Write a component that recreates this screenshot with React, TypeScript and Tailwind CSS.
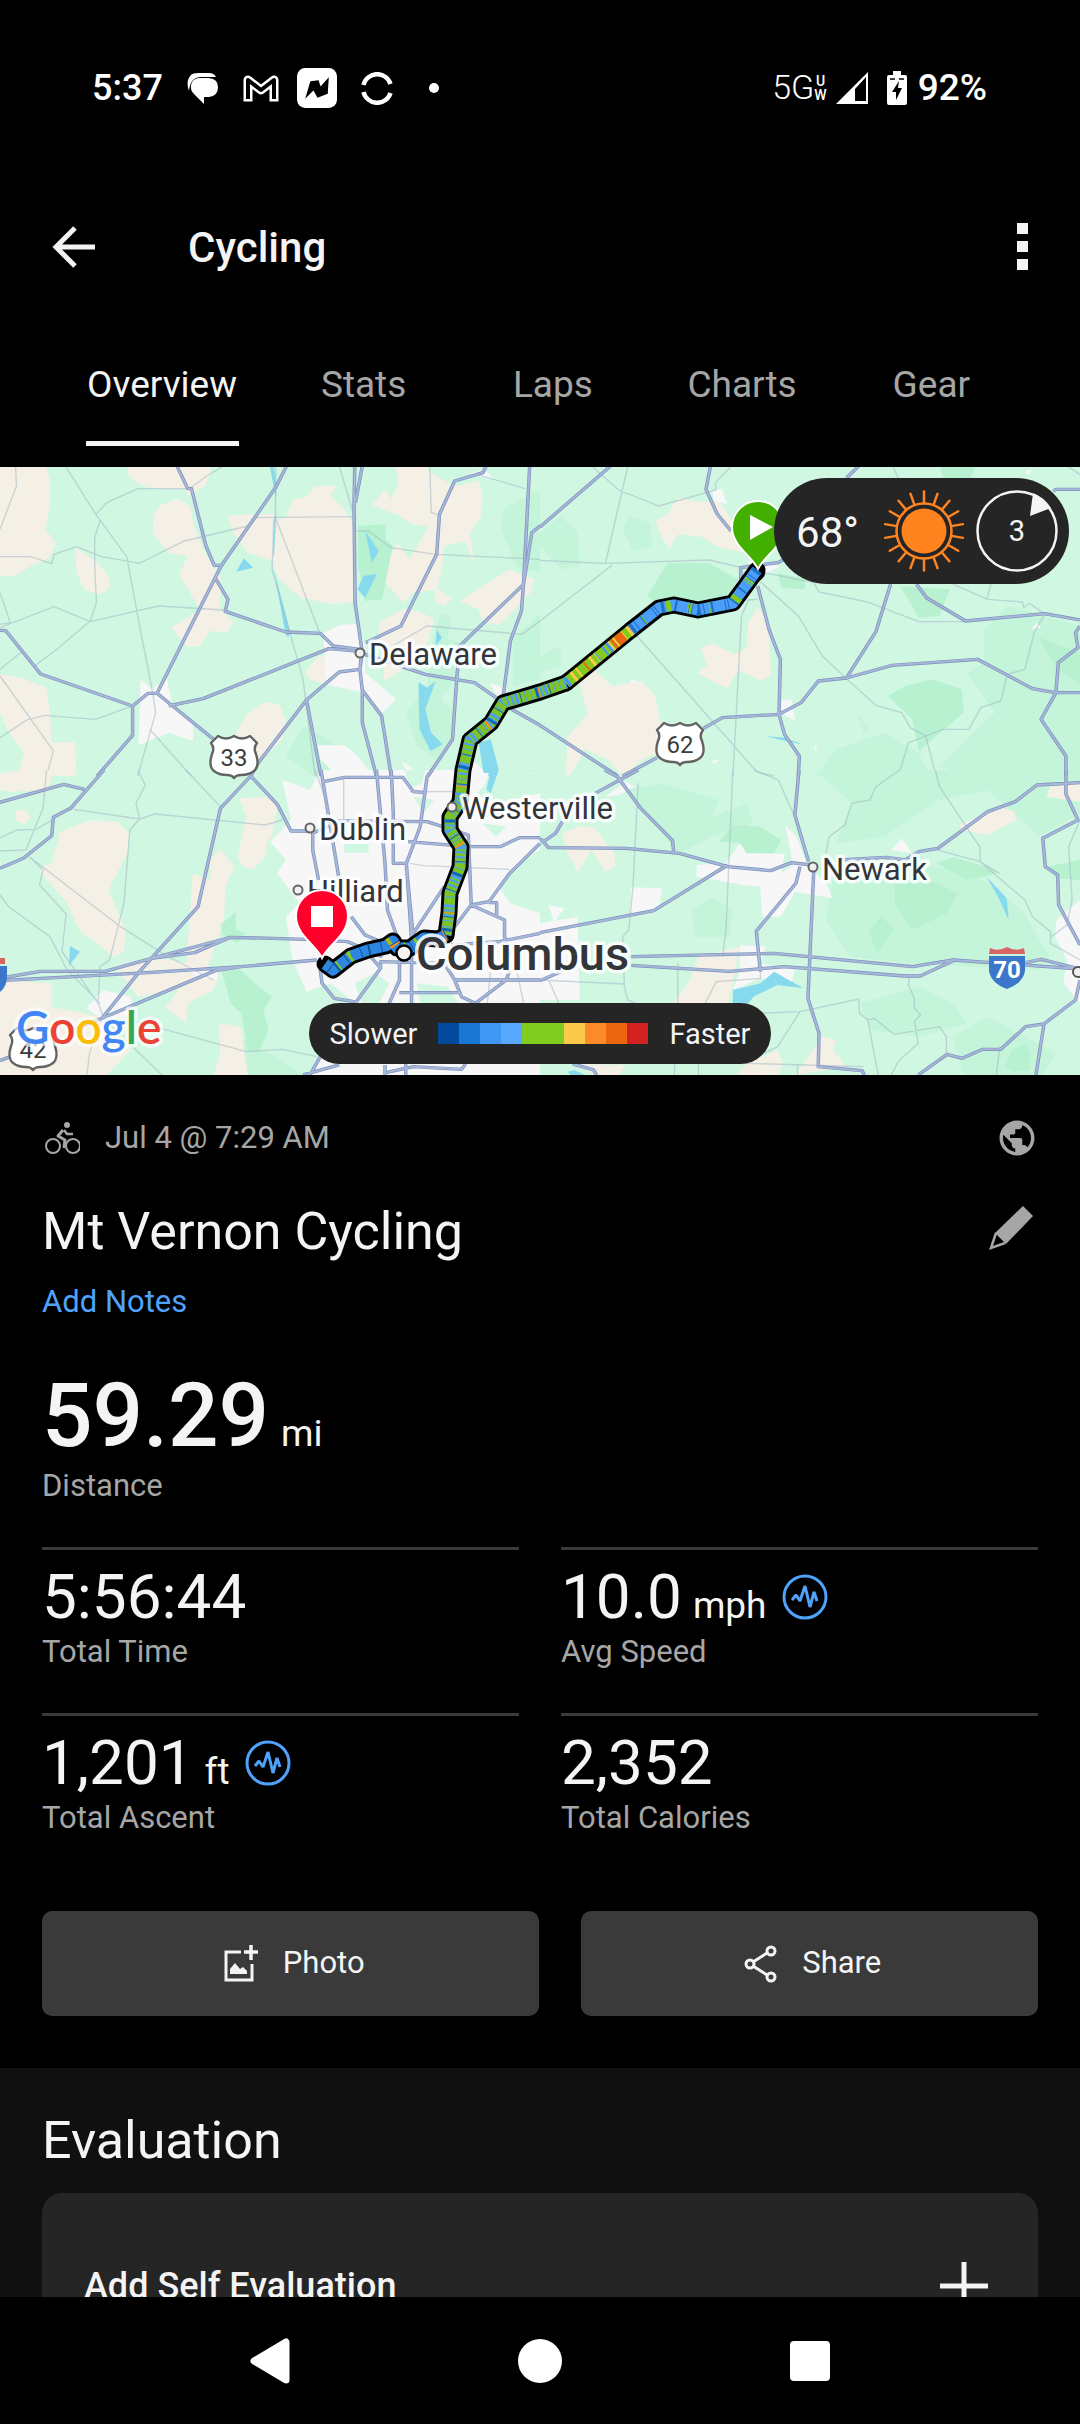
import type { ReactNode } from "react";
import { MdPublic } from "react-icons/md";

const tabs = ["Overview", "Stats", "Laps", "Charts", "Gear"];

const stats = [
  { value: "5:56:44", label: "Total Time" },
  { value: "10.0", unit: "mph", label: "Avg Speed", chart: true },
  { value: "1,201", unit: "ft", label: "Total Ascent", chart: true },
  { value: "2,352", label: "Total Calories" },
];

const speedColors = [
  "bg-[#014a9c]",
  "bg-[#1976d2]",
  "bg-[#3f96f3]",
  "bg-[#56a9ff]",
  "bg-[#82cb1f]",
  "bg-[#82cb1f]",
  "bg-[#fbca4b]",
  "bg-[#fb8b29]",
  "bg-[#ea660f]",
  "bg-[#d32121]",
];

// The map is split in four tiles, each with its own drawing units
const tiles = [
  {
    place: "translate(0 -1) scale(.3444 .3333)",
    beige:
      "M0 0H132L145 40V120L132 190L162 232L150 268L140 278L90 300L50 325L25 333L0 328Z M375 0H610L612 20L595 60L545 90L540 70L430 65L390 45L370 20Z M515 98L552 120L556 150L570 200L600 270L640 330L640 430L676 465L662 500L610 495L580 540L545 543L497 485L580 430L520 325L545 270L490 262L445 205V150L465 118Z M662 148L790 143L800 160L832 152L850 98L885 95L915 62L975 58L960 90L1000 130L1025 170V410L960 413L875 395L810 340L790 285L720 260L680 205Z M1080 118L1120 70L1135 100L1155 55L1150 0H1235L1250 20L1320 60L1390 45L1402 90L1395 155L1365 200L1375 290L1350 225L1290 240L1285 300L1270 370L1200 380L1170 410L1120 350L1110 310L1155 230L1190 280L1245 180L1200 175L1150 145Z M1265 365L1313 395L1290 420L1262 405Z M1335 405L1395 365L1480 310L1550 340L1540 380L1450 478L1400 465L1390 430Z M1100 500V470L1180 425L1225 440L1260 460L1240 540L1170 610L1115 645L1110 560Z M218 245L280 285L318 335V365L285 387L245 370L222 320Z M0 625L60 635L135 665L145 740L150 830L218 828L222 930H50L70 860L20 790L0 740Z M680 810L720 740L770 708L810 715L830 760L820 820L780 860L750 890L735 820Z M885 620L925 570L945 575L945 655L900 640Z",
    light:
      "M1460 130L1568 70V320L1500 300L1455 190Z M1258 520L1280 440L1310 450L1300 520L1340 530L1350 600L1280 700L1320 740L1310 840L1265 880L1210 840L1180 740L1240 660Z M1490 520L1568 440V640L1490 660Z M830 870L880 780L970 830L990 930H910L880 905Z",
    dark: "M1040 180L1120 175V220L1140 240L1110 400L1060 405L1040 300Z",
    urban:
      "M940 500L985 478L1035 473L1060 540V620L1150 700L1112 740L1060 680L945 655Z M408 640L440 668L485 640L500 715L560 770V825L490 800L402 838Z M922 838H1000L1040 870L1080 930H980L930 880Z M1405 10L1435 40L1360 25Z M1340 930L1370 880L1420 930Z M1420 650L1475 670L1450 700Z M1165 885L1230 930H1190Z",
    water:
      "M783 0H795L802 60V100Z M797 150L802 150L796 270L793 268Z M795 310L843 500L836 515L828 500Z M708 277L735 305L686 317Z M1060 195L1100 255L1080 292Z M1055 330L1095 323L1060 395L1038 370Z M1268 490L1283 515L1265 540Z M1215 648L1240 665L1265 645L1235 730L1252 800L1285 835L1250 855L1218 790Z M1390 830L1425 820L1448 910L1430 930H1405Z",
    minor:
      "M190 0L278 145L368 272L400 450L445 690L452 740L400 930 M278 145L310 110L400 68H550L600 30L650 0 M290 165L275 215V300L280 410L262 465L165 550L100 600 M60 560L0 610 M0 272H88L150 293L157 265L222 242L295 272L405 292L535 225L720 180 M0 485L157 422L262 467L460 420L650 432 M45 0L48 60L0 190 M0 630L155 855L135 930 M0 815L78 762L130 748L278 760L385 720 M435 790L555 930 M740 155L1022 152 M800 0V155L928 500 M795 160L790 310L880 640L915 930 M985 0L1028 150 M1035 195H1070L1135 245L1265 265L1568 280 M1248 0L1252 140L1270 145 M1385 25L1525 68 M1140 540L1240 480L1515 505L1568 465 M0 380L30 470L0 475",
    major:
      "M0 493L17 494L118 624L385 720L430 682H456L620 820 M385 720V808L282 930 M514 0L545 68H556L598 240L622 298H642 M832 0L800 65L642 300L456 682 M626 338L662 400L654 436L830 498L930 502L968 540L1045 550 M490 720L590 698L955 548L1045 556 M728 930L750 890L890 702L985 618L1045 610L1050 560 M890 702L932 930 M1030 0L1028 120L1031 410L1052 560L1045 610L1052 672L1108 750L1136 930 M1052 672V770L1093 930 M1052 0L1032 110 M1412 0L1402 20L1320 45L1276 145L1268 265L1164 480L1062 530 M1538 0L1520 355L1514 435L1482 525L1460 700 M1568 180L1544 200L1520 355L1335 540L1326 640L1314 820L1243 930 M1060 565L1235 625L1378 650L1440 695 M1485 730L1568 778",
  },
  {
    place: "translate(540 -1) scale(.3444 .3333)",
    beige:
      "M335 165L370 145L400 95L450 105L520 108L555 160L630 240L580 258L510 240L470 212L400 205L375 248L355 215Z M630 425L660 450L672 630L640 643L575 612L545 668L455 620L485 598L468 545L500 532L565 565L600 545L605 470Z M75 930L80 810L140 745L110 640L155 610L210 660L295 645L335 690L350 770L340 860L300 880L240 930L195 880L130 850L90 925Z",
    light:
      "M240 190L260 150L320 170L325 240L270 255Z M0 200L60 150L110 200L115 300L60 310L0 240Z M1290 490L1360 420L1568 480V930H1240L1160 900L1320 740L1240 620L1290 590Z M800 930L860 850L1000 800L1100 860L1130 930Z M0 570L60 540V600L0 620Z M920 740L960 790L940 800Z",
    dark: "M370 290L490 292L575 340L545 400L340 412L312 390Z M1010 690L1060 660L1140 640L1225 670L1230 740L1100 855L1080 760Z M1045 360L1190 370L1160 450L1100 455Z M1160 0H1265L1250 36H1170Z M1450 515L1568 560V650L1500 610Z M690 320L770 340V370L700 365Z",
    urban:
      "M500 75L528 68L543 115L505 105Z M695 705L730 700L742 765L700 740Z M600 285L700 300L640 330Z M1425 490L1445 470L1455 485Z M260 650L270 638L285 650Z M1410 15L1428 10L1418 28Z M500 885L522 880L505 895Z M795 855L803 825V850Z",
    water: "M655 810L710 815L765 836L700 822Z",
    minor:
      "M255 0L190 292 M150 0L228 72L345 120L510 72V50L556 0 M0 283L190 292L490 282L580 303 M210 297L0 465 M282 510L630 918L680 930 M632 400L605 402L585 450L560 930 M632 340L750 450L820 570L890 638L975 718L1050 740L1075 785L1120 810L1150 930 M650 320L795 350L810 378L950 408L1100 467H1230 M1200 355L1300 400L1400 408L1405 425L1420 412L1460 440 M1465 445L1435 500L1408 610L1357 625L1338 705L1280 725L1245 790H1170L1070 830L1045 915L1020 930 M1310 350L1298 398 M1025 0L1040 36 M1530 0L1568 25",
    major:
      "M205 0L0 183 M495 0L482 70L515 145L555 195 M925 0L890 36 M1490 75L1500 70H1568 M1018 355L975 498L890 636L808 645L758 710L694 745L530 755L475 787 M340 875L240 930 M0 778L225 930 M1093 355L1123 396L1236 465L1465 443L1568 462 M632 360L665 490L698 580L694 745L710 805L753 870L750 930 M583 340V305L690 290L710 280 M890 636L1022 598L1270 580L1430 668L1495 680H1568 M1568 480L1555 500L1562 545L1505 590L1498 680L1455 760L1527 870V930",
  },
  {
    place: "translate(0 303) scale(.3444 .3333)",
    beige:
      "M0 10L60 0H155L140 60L30 65L0 60Z M45 125L70 118L90 140L70 162L45 150Z M175 185L260 150L340 155L375 190L370 250L315 360L365 480L360 545L330 560L230 480L195 400L120 310V290L150 280Z M695 85L780 82L805 110L790 200L775 215L770 260L735 298L705 290L690 260L715 140Z M560 310L610 330L610 270L640 235L680 290L655 350L650 450L600 600L540 590Z M330 590L440 560L640 600L620 660L545 700L540 760L480 712L520 660L400 680Z M0 690L200 720L290 740L380 840L310 915H0Z M0 630L150 640L150 720L0 710Z M635 760L700 770L720 915H620L640 850Z M850 430L900 500L905 540L870 545Z",
    light:
      "M1360 60L1540 0H1568V60L1430 90Z M700 915L690 800L800 860L880 915Z",
    dark: "M640 465L685 425V480L712 490L690 520L650 500Z M640 590L700 600L740 640L790 680L765 720L780 780L750 850L720 840L700 730L670 700Z",
    urban:
      "M820 30L900 60L930 0H1330L1420 10L1390 90L1568 60V700H1030L960 640L890 665L850 570L830 440L870 400L805 310L830 270L785 215L845 150Z M925 860L1568 880V915H900Z M300 660L380 680L385 740L300 750L250 715Z M540 590L630 600L630 630L570 620Z",
    // parks that sit inside the built-up area
    park: "M1000 222H1070V248H1000Z M1175 0H1235L1225 40L1190 55Z M1385 70L1430 20L1568 0V70L1440 100Z M1480 300L1568 240V430L1480 400L1450 350Z M1030 640L1090 610L1130 640L1100 700H1050Z M1400 160L1470 170L1440 200Z M1210 640L1300 650L1330 700H1220Z M1200 80L1260 90L1230 130Z",
    water: "M1425 0H1448L1425 70L1412 60Z M203 528L232 545L200 588Z",
    minor:
      "M400 0L422 45L395 100L405 147L377 180L360 400L318 570L290 590L285 700L300 740 M540 0L640 110 M215 118L405 147L450 132L770 165L820 150 M85 260L125 300L115 345L192 432L180 545L285 700 M85 260L350 470L480 555L620 630 M135 0L125 115L75 240L0 243 M0 203L50 180L105 178L160 145 M0 375L25 410L145 500L195 600L290 700 M300 745L470 915 M295 745L260 850L252 915 M375 750L715 845L820 838L920 860 M915 0L950 100 M998 20V150L980 160 M1190 65H1340 M1190 280L1230 287L1480 298 M1415 700L1425 600L1380 560 M1530 745L1500 600",
    major:
      "M0 97L185 43L245 58 M302 0L205 115L155 142L150 197L68 265L0 295 M728 18L805 103L845 183H900 M728 18L640 115L575 410L405 605L296 745L200 785 M0 625L117 604H305L440 565L670 502L890 508L1010 515L1110 560 M0 632L430 608L700 590L920 570 M296 745L625 602L700 590 M440 565L565 548L670 502 M0 872L30 860 M932 0L985 330 M925 330L908 240V190L985 153L1240 155L1360 195L1368 400 M940 35L1000 22H1170L1200 65L1240 68 M1093 0L1118 280L1125 420L1160 520 M1136 0L1142 130V280H1180L1220 170L1240 20L1255 0 M1180 280L1195 510V700 M1185 215L1360 230H1452L1508 203H1568 M1180 290L1200 500 M1290 350L1200 490 M1568 220L1480 310L1420 395L1368 405L1320 470 M1368 405L1465 450V500L1480 560 M1420 398H1442V440 M930 600L935 640L970 685L1040 697 M1035 695L1105 595L1060 540 M1105 595V575L1290 580L1320 630L1340 680L1380 700 M1320 630H1568 M1160 570V630L1130 700 M1160 668H1335 M1380 700L1470 630L1480 600 M1310 525L1450 515L1568 490 M1020 440L1060 495L1140 530 M1118 885V915 M1120 908L1200 890L1340 898L1352 882 M1178 882V915 M880 915L985 885 M930 860L900 915",
  },
  {
    place: "translate(540 303) scale(.3444 .3333)",
    beige:
      "M65 190L115 168L160 175L218 255V290L190 305L150 240L110 305L75 240Z M1220 165L1330 110L1380 125V150L1300 195L1220 180Z M1480 50L1568 40V95L1470 80Z M460 560L580 530L560 640L545 700H385L430 640Z M820 800L860 810L850 840L890 890L740 915Z M600 880L690 840L705 880L690 915H570Z M100 882L250 885L230 915H160Z",
    light:
      "M250 60L350 40L520 90L500 140L600 100L620 160L500 200L400 250Z M800 0H1568V130L1450 200L1300 60L1160 90L1000 200L860 220L905 100Z M850 330L1000 280L1250 300L1400 420L1480 560L1450 600L1250 590L1080 580L900 560L830 450Z M930 700L1100 650L1200 700L1240 760L1100 800L960 780Z M1200 800L1300 740L1500 850L1460 915H1230Z M440 420L500 380L560 420L550 500L450 500Z",
    dark: "M520 215L560 165L640 170L700 210L680 250L590 250L575 218Z M1030 340L1140 335L1215 370L1180 430L1080 480L1030 400Z M1150 280L1200 262L1310 295L1330 310L1240 330Z M955 485L990 440L1030 475L980 550Z M1470 290L1568 270V330L1500 325Z M1350 890L1370 840L1410 820L1425 850L1420 900L1380 905Z",
    urban:
      "M190 80L250 35L275 50L230 75Z M455 285L540 280L580 220L600 250L710 252L700 310L735 285L712 165L745 200L770 270L800 310L830 340L850 385L740 365L700 440L645 440L640 350L590 345L455 320Z M265 352L355 355L345 415L262 430Z M0 460L110 440L115 690H0Z M25 405L72 415L40 455Z M1050 205L1080 250L1020 240Z M1500 450L1568 390V700L1520 640L1530 570L1495 500Z M580 525L655 530L640 580L740 600L730 640L640 625L560 660L580 600Z",
    water:
      "M560 660L640 640L680 605L765 655L690 645L620 680L605 700H560Z M1295 318L1355 385L1361 450L1330 380Z M80 905L100 900L130 915H90Z",
    minor:
      "M560 0L540 480L530 560 M285 40L270 350L258 480L240 500L245 650L255 690L300 710 M0 630L245 642 M25 630L55 700 M620 0L692 30L740 140 M830 250L840 200L885 165L905 100L958 90L975 50L1045 0 M1148 0L1160 50L1278 232V275L1408 390L1430 440L1482 485V520L1568 570 M1155 240L1278 275L1335 310 M1568 150L1535 230L1545 390L1530 465L1485 500 M1072 620L1070 645L1087 685V715L1105 735L1087 755L1098 820L1040 875L1020 915 M640 730L755 725L925 687L928 730L952 750L982 915 M952 750L970 745L1028 793L1160 770L1180 800V850 M755 725L690 830L650 850 M600 880L940 890 M1335 830L1325 915 M400 580V700L390 915 M460 880V915 M480 700L512 635L640 625V580 M748 885V915",
    major:
      "M188 0L225 20L290 112L385 212L388 245 M285 0L160 70 M65 155L45 190L10 215 M0 205L25 233L250 235L405 250L545 290L670 302L730 278L790 285 M545 285L330 422L0 488 M752 0L740 135L780 275 M795 300L778 685L810 790L808 890L935 902L942 915 M755 290L743 340L628 484L640 605 M265 560L680 550L1082 590L1200 570L1568 597 M265 586L550 604L710 590L1060 618H1104L1200 572 M1400 580L1455 568L1568 597 M870 270L1005 262L1060 270L1100 245L1155 235L1300 125L1380 95L1443 45L1568 38 M1527 0V72L1562 150L1460 205L1467 290L1503 315L1506 405L1568 525 M1568 630L1555 690L1463 762L1410 770L1338 838L1286 838L1226 865L1182 853L1098 915 M1463 765L1440 915 M0 632L60 605 M95 882L155 900L165 915",
  },
];

const routeNorth =
  "M757 103L733 136L698 143L674 138L659 141L631 163";
const routeMiddle = "M631 163L566 216";
const routeSouth =
  "M566 216L540 225L503 236L491 256L470 273L463 303L460 335L450 350L450 363L461 380L460 400L450 426L449 446L446 468";
const routeCity =
  "M446 468L438 472L424 471L410 481L397 481L393 474L386 479L368 483L351 489L333 503L325 497";

const towns = [
  { name: "Delaware", x: 369, y: 198, cx: 360, cy: 186 },
  { name: "Westerville", x: 462, y: 352, cx: 452, cy: 340 },
  { name: "Dublin", x: 319, y: 373, cx: 310, cy: 361 },
  { name: "Hilliard", x: 307, y: 435, cx: 298, cy: 423 },
  { name: "Newark", x: 822, y: 413, cx: 813, cy: 400 },
];

function UsShield({ x, y, children }: { x: number; y: number; children: ReactNode }) {
  return (
    <g transform={`translate(${x} ${y})`}>
      <path
        d="M-16 -20Q-8 -15 0 -20Q8 -15 16 -20L23 -13Q19 -8 22 -2Q26 10 20 15Q15 19 7 19Q2 19 0 22Q-2 19 -7 19Q-15 19 -20 15Q-26 10 -22 -2Q-19 -8 -23 -13Z"
        fill="#fff"
        stroke="#636363"
        strokeWidth="2.4"
        strokeLinejoin="round"
      />
      <text y="10" textAnchor="middle" fontSize="24" fill="#3c3c3c">
        {children}
      </text>
    </g>
  );
}

function Pin({ x, y, color, children }: { x: number; y: number; color: string; children: ReactNode }) {
  return (
    <g transform={`translate(${x} ${y})`}>
      <path
        d="M0 42C-7 28 -26 19 -26 0A26 26 0 0 1 26 0C26 19 7 28 0 42Z"
        fill={color}
        stroke="#fff"
        strokeWidth="2"
      />
      {children}
    </g>
  );
}

function RouteMap() {
  return (
    <svg viewBox="0 0 1080 608" className="block w-full" role="img" aria-label="Route map">
      <rect width="1080" height="608" fill="#d0f7e2" />
      {tiles.map((t) => (
        <g key={t.place} transform={t.place}>
          <path d={t.light} fill="#c4f4da" />
          <path d={t.beige} fill="#f5f0e5" />
          <path d={t.dark} fill="#b8f1d0" />
          <path d={t.urban} fill="#f7f7f7" />
          {t.park && <path d={t.park} fill="#d0f7e2" />}
          <path d={t.water} fill="#87daee" />
          <path d={t.minor} fill="none" stroke="#9fb4c4" strokeOpacity="0.5" strokeWidth="4" />
        </g>
      ))}
      {tiles.map((t) => (
        <g key={t.place} transform={t.place} fill="none" strokeLinejoin="round">
          <path d={t.major} stroke="#7d8fbc" strokeWidth="10" />
          <path d={t.major} stroke="#a6b7d8" strokeWidth="6" />
        </g>
      ))}

      <UsShield x={234} y={289}>33</UsShield>
      <UsShield x={680} y={276}>62</UsShield>
      <UsShield x={33} y={581}>42</UsShield>

      {/* Interstate shields */}
      <path d="M0 499H7V508Q7 520 0 525Z" fill="#3b78cb" />
      <path d="M0 491L5 491V497H0Z" fill="#d96464" />
      <g transform="translate(1007 501)">
        <path d="M-18 -14L-17 -20Q-9 -16 0 -21Q9 -16 17 -20L18 -14Z" fill="#d96464" />
        <path d="M-18 -12H18V3Q16 15 0 21Q-16 15 -18 3Z" fill="#3b78cb" />
        <text y="10" textAnchor="middle" fontSize="24" fontWeight="700" fill="#fff">
          70
        </text>
      </g>
      <circle cx="1078" cy="505" r="5" fill="#f0f0f0" stroke="#555" strokeWidth="2" />

      {/* Route, coloured by speed */}
      <g fill="none" strokeLinejoin="round">
        {[routeNorth, routeMiddle, routeSouth, routeCity].map((d) => (
          <path key={d} d={d} stroke="#000" strokeWidth="17" strokeLinecap="round" />
        ))}
        <path d="M760 100Q769 106 759 113" stroke="#000" strokeWidth="2" />
        <g strokeWidth="11">
          <path d={routeNorth} stroke="#4b9ff8" />
          <path d={routeNorth} stroke="#1e6fc6" strokeDasharray="3 5 1 2 1 12 2 7 1 3" />
          <path d={routeNorth} stroke="#82cb1f" strokeDasharray="0 12 2 1 1 17 5 26 1 6" />
          <path d={routeMiddle} stroke="#82cb1f" />
          <path d={routeMiddle} stroke="#fbca4b" strokeDasharray="3 5 1 9 2 4" />
          <path d={routeMiddle} stroke="#ea660f" strokeDasharray="0 9 9 2 3 33 2 40" />
          <path d={routeMiddle} stroke="#3f96f3" strokeDasharray="0 26 3 3 2 8 1 11" />
          <path d={routeSouth} stroke="#7cc426" />
          <path d={routeSouth} stroke="#4b9ff8" strokeDasharray="2 4 1 5 1 7 3 2 2 3" />
          <path d={routeSouth} stroke="#1565b8" strokeDasharray="0 17 1 11 3 15 1 9" />
          <path d={routeSouth} stroke="#fb8b29" strokeDasharray="0 28 1 63 2 41" />
          <path d={routeCity} stroke="#2f86e2" />
          <path d={routeCity} stroke="#82cb1f" strokeDasharray="0 30 3 12 2 16 4 9" />
          <path d={routeCity} stroke="#fb8b29" strokeDasharray="2 54 2 7 1 90" />
          <path d={routeCity} stroke="#0d559f" strokeDasharray="1 11 2 7 1 15" />
        </g>
      </g>

      <g stroke="#fff" strokeOpacity="0.85" strokeWidth="7" strokeLinejoin="round" fill="#32353a">
        {towns.map((town) => (
          <text key={town.name} x={town.x} y={town.y} fontSize="31" className="[paint-order:stroke]">
            {town.name}
          </text>
        ))}
        <text x="416" y="503" fontSize="47" fontWeight="500" className="[paint-order:stroke]">
          Columbus
        </text>
      </g>
      {towns.map((town) => (
        <circle key={town.name} cx={town.cx} cy={town.cy} r="4.5" fill="#f0f0f0" stroke="#666" strokeWidth="2" />
      ))}
      <circle cx="404" cy="486" r="7.5" fill="#f2f2f2" stroke="#000" strokeWidth="2.5" />

      <Pin x={758} y={60} color="#43b000">
        <path d="M-8 -12V13L15 0Z" fill="#fff" />
      </Pin>
      <Pin x={322} y={449} color="#ff002b">
        <path d="M-11 -10H11V11H-11Z" fill="#fff" />
      </Pin>

      <text
        x="16"
        y="577"
        fontSize="46"
        fontFamily="Lato, sans-serif"
        fontWeight="600"
        stroke="#fff"
        strokeOpacity="0.7"
        strokeWidth="7"
        strokeLinejoin="round"
        className="[paint-order:stroke]"
      >
        <tspan fill="#4285f4">G</tspan>
        <tspan fill="#ea4335">o</tspan>
        <tspan fill="#fbbc05">o</tspan>
        <tspan fill="#4285f4">g</tspan>
        <tspan fill="#34a853">l</tspan>
        <tspan fill="#ea4335">e</tspan>
      </text>
    </svg>
  );
}

function SunIcon() {
  const rays = Array.from({ length: 18 }, (_, i) => i * 20);
  return (
    <svg viewBox="-41 -41 82 82" className="size-[82px]" stroke="#ff841f" fill="none">
      <circle r="22.5" fill="#ff841f" stroke="none" />
      <circle r="27.5" strokeWidth="2.5" />
      {rays.map((deg) => (
        <path key={deg} d="M0 -28V-39.5" strokeWidth="2.5" strokeLinecap="round" transform={`rotate(${deg})`} />
      ))}
    </svg>
  );
}

function PulseIcon() {
  return (
    <svg viewBox="0 0 46 46" className="size-[46px]" fill="none" stroke="#4fa3fb">
      <circle cx="23" cy="23" r="21" strokeWidth="3" />
      <path d="M10 26L14 21L18 27L23 12L28 33L32 18L35 27" strokeWidth="3" strokeLinejoin="bevel" />
    </svg>
  );
}

function StatusBar() {
  return (
    <div className="flex h-44 items-center justify-between pr-[93px] pl-[92px] text-4xl font-medium text-white">
      <div className="flex items-center">
        <span>5:37</span>
        <svg viewBox="0 0 32 32" className="ml-6 h-8 w-8">
          <path d="M2 19Q-2 8 5 2Q8 1 12 1H22Q27 1 29 5H13Q3 6 2 19Z" fill="#fff" />
          <path d="M12 6H22Q31 7 31 15Q31 24 22 25H17V32L7 22Q3 18 4 13Q5 7 12 6Z" fill="#fff" />
        </svg>
        <svg viewBox="0 0 36 28" className="ml-6 h-7 w-9" fill="none" strokeLinejoin="round">
          <path d="M5 23V6L18 16L31 6V23" stroke="#fff" strokeWidth="9" strokeLinecap="square" />
          <path d="M5 23V6L18 16L31 6V23" stroke="#000" strokeWidth="4" strokeLinecap="square" />
        </svg>
        <svg viewBox="0 0 39 39" className="ml-[18px] h-10 w-10">
          <rect width="39" height="39" rx="8" fill="#fff" />
          <path d="M8 30L13 13L21 12L23 18L31 9L30 25L20 29L16 22Z" fill="#000" />
        </svg>
        <svg viewBox="0 0 32 33" className="ml-6 h-[33px] w-8" fill="none" stroke="#fff" strokeWidth="4.5">
          <path d="M2.5 13A14 14 0 0 1 29.5 12" />
          <path d="M2.5 20A14 14 0 0 0 29.5 21" />
        </svg>
        <span className="ml-9 size-[10px] rounded-full bg-white" />
      </div>
      <div className="flex items-center">
        <span className="text-[34px] font-light">5G</span>
        <span className="flex flex-col items-center text-sm leading-[14px] font-medium">
          <span>U</span>
          <span>W</span>
        </span>
        <svg viewBox="0 0 34 34" className="ml-2 size-[34px]">
          <path d="M33 1V33H1Z" fill="#fff" />
          <path d="M31 6V30H20V18Z" fill="#000" />
        </svg>
        <svg viewBox="0 0 20 34" className="ml-[18px] h-[34px] w-5">
          <path d="M6 0H14V4H18Q20 4 20 6V32Q20 34 18 34H2Q0 34 0 32V6Q0 4 2 4H6Z" fill="#fff" />
          <path d="M12 10L5 21H9V29L15 17H11Z" fill="#000" />
          <path d="M3 8H8M12 8H17" stroke="#000" strokeWidth="1.5" />
        </svg>
        <span className="ml-[11px] text-[37px]">92%</span>
      </div>
    </div>
  );
}

export default function App() {
  return (
    <div className="flex h-screen w-full flex-col bg-black font-[Roboto,sans-serif] text-[#f4f4f4]">
      <StatusBar />

      <header className="flex h-[141px] items-center px-[52px]">
        <button aria-label="Back">
          <svg viewBox="0 0 44 44" className="size-11" fill="none" stroke="#f4f4f4" strokeWidth="5">
            <path d="M23 3L4 22L23 41M4 22H43" />
          </svg>
        </button>
        <h1 className="ml-[92px] flex-1 pt-[2px] text-[42px] font-medium">Cycling</h1>
        <button aria-label="More options" className="flex flex-col gap-[7px]">
          <span className="size-[11px] bg-[#f4f4f4]" />
          <span className="size-[11px] bg-[#f4f4f4]" />
          <span className="size-[11px] bg-[#f4f4f4]" />
        </button>
      </header>

      <nav className="flex pr-[54px] pb-[21px] pl-14 text-[37px]">
        {tabs.map((tab, i) =>
          i === 0 ? (
            <button key={tab} className="relative h-[129px] pt-[6px] pr-8 pl-[31px]">
              {tab}
              <span className="absolute inset-x-[30px] bottom-0 h-[5px] bg-[#f4f4f4]" />
            </button>
          ) : (
            <button key={tab} className="h-[129px] flex-1 pt-[6px] text-[#a6a6a6]">
              {tab}
            </button>
          )
        )}
      </nav>

      <main className="min-h-0 flex-1 overflow-hidden">
        <section className="relative">
          <RouteMap />
          <div className="absolute top-[11px] right-[11px] flex h-[106px] items-center rounded-full bg-[#252525] pr-[11px] pl-[22px]">
            <span className="pt-[2px] text-[42px]">68°</span>
            <div className="ml-6">
              <SunIcon />
            </div>
            <div className="relative ml-[11px]">
              <svg viewBox="-41 -41 82 82" className="size-[82px]">
                <circle r="39.5" fill="none" stroke="#f4f4f4" strokeWidth="2.5" />
                <path d="M16 -38Q27 -34 34 -23L13 -15Z" fill="#f4f4f4" />
              </svg>
              <span className="absolute inset-0 flex items-center justify-center pt-[2px] text-[29px]">3</span>
            </div>
          </div>
          <div className="absolute inset-x-0 bottom-[11px] flex justify-center">
            <div className="flex h-[61px] items-center gap-[21px] rounded-full bg-[#252525] px-[21px] text-[29px]">
              <span className="pt-[2px]">Slower</span>
              <div className="flex">
                {speedColors.map((color, i) => (
                  <span key={i} className={`size-[21px] ${color}`} />
                ))}
              </div>
              <span className="pt-[2px]">Faster</span>
            </div>
          </div>
        </section>

        <section className="px-[42px] pt-[42px] pb-[52px]">
          <div className="flex h-[42px] items-center text-[31px] text-[#a6a6a6]">
            <svg viewBox="0 0 38 34" className="h-[34px] w-[38px]" fill="none" stroke="#a6a6a6">
              <circle cx="11" cy="25" r="7" strokeWidth="2" />
              <circle cx="31" cy="25" r="7" strokeWidth="2" />
              <circle cx="25" cy="4" r="3" fill="#a6a6a6" stroke="none" />
              <path d="M21 9L16 15L23 19L22 27" strokeWidth="3" strokeLinejoin="round" />
              <path d="M22 9L25 13H31" strokeWidth="2.5" />
            </svg>
            <span className="ml-[25px] flex-1">Jul 4 @ 7:29 AM</span>
            <MdPublic size={42} />
          </div>

          <div className="mt-[43px] flex h-[60px] items-center justify-between">
            <h2 className="text-[52px] leading-[60px]">Mt Vernon Cycling</h2>
            <button aria-label="Edit name" className="pr-1">
              <svg viewBox="0 0 46 54" className="h-[54px] w-[46px]">
                <path d="M35 1L45 11L18 39L7 28Z" fill="#a6a6a6" />
                <path d="M8 28L3 43L17 38" fill="none" stroke="#a6a6a6" strokeWidth="2.5" />
              </svg>
            </button>
          </div>

          <a href="#notes" className="mt-5 block text-[31px] leading-10 text-[#4fa3fb]">
            Add Notes
          </a>

          <div className="mt-[50px] flex items-baseline gap-3">
            <span className="text-[89px] leading-[88px] font-medium">59.29</span>
            <span className="text-[37px] leading-none">mi</span>
          </div>
          <p className="mt-[6px] text-[31px] leading-10 text-[#a6a6a6]">Distance</p>

          <div className="mt-[41px] grid grid-cols-2 gap-x-[42px] gap-y-[41px]">
            {stats.map((stat) => (
              <div key={stat.label} className="border-t-[3px] border-[#3a3a3a] pt-3">
                <div className="flex h-[70px] items-center">
                  <div className="flex items-baseline gap-[11px]">
                    <span className="text-[62px] leading-[70px]">{stat.value}</span>
                    {stat.unit && <span className="text-[37px] leading-none">{stat.unit}</span>}
                  </div>
                  {stat.chart && (
                    <button aria-label={`${stat.label} chart`} className="ml-[15px]">
                      <PulseIcon />
                    </button>
                  )}
                </div>
                <p className="text-[31px] leading-10 text-[#a6a6a6]">{stat.label}</p>
              </div>
            ))}
          </div>

          <div className="mt-[73px] flex gap-[42px] text-[31px]">
            <button className="flex h-[105px] flex-12 items-center justify-center gap-6 rounded-[10px] bg-[#3a3a3a] pl-[6px]">
              <svg viewBox="0 0 36 38" className="h-[38px] w-9">
                <path d="M18 7H3V35H29V19" fill="none" stroke="#f4f4f4" strokeWidth="3" />
                <path d="M28 0V15M21 7H35" stroke="#f4f4f4" strokeWidth="3.5" />
                <path d="M7 29V24L12 18L17 24L20 22L24 26V29Z" fill="#f4f4f4" />
              </svg>
              Photo
            </button>
            <button className="flex h-[105px] flex-11 items-center justify-center gap-6 rounded-[10px] bg-[#3a3a3a] pl-[6px]">
              <svg viewBox="0 0 34 38" className="h-[38px] w-[34px]" fill="none" stroke="#f4f4f4" strokeWidth="3">
                <circle cx="6" cy="19" r="4" />
                <circle cx="27" cy="6" r="4" />
                <circle cx="27" cy="32" r="4" />
                <path d="M9 17L23 8M9 21L23 30" />
              </svg>
              Share
            </button>
          </div>
        </section>

        <section className="bg-[#101010] px-[42px] pt-[43px]">
          <h2 className="text-[52px] leading-[60px]">Evaluation</h2>
          <button className="mt-[22px] flex w-full items-center justify-between rounded-[20px] bg-[#252525] px-[42px] py-[69px] text-[36px] leading-[44px] font-medium">
            Add Self Evaluation
            <svg viewBox="0 0 64 48" className="h-12 w-16" stroke="#f4f4f4" strokeWidth="5">
              <path d="M32 0V48M8 24H56" />
            </svg>
          </button>
        </section>
      </main>

      <nav className="z-10 grid h-[127px] grid-cols-3 place-items-center bg-black px-[12.5%]">
        <button aria-label="System back">
          <svg viewBox="0 0 40 46" className="h-[46px] w-10">
            <path d="M36 4V42L4 23Z" fill="#fff" stroke="#fff" strokeWidth="7" strokeLinejoin="round" />
          </svg>
        </button>
        <button aria-label="Home" className="size-11 rounded-full bg-white" />
        <button aria-label="Recent apps" className="size-10 rounded-[4px] bg-white" />
      </nav>
    </div>
  );
}
